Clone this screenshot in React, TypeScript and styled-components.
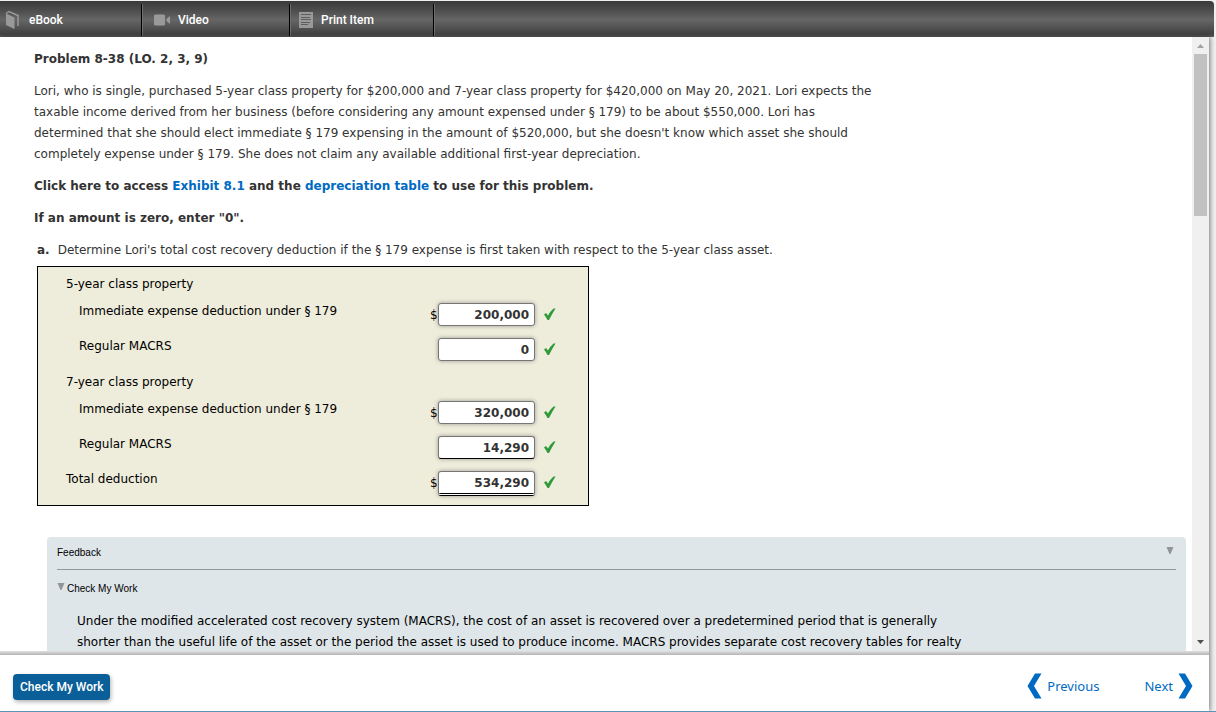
import React from "react";
import styled, { createGlobalStyle, css } from "styled-components";

const GlobalStyle = createGlobalStyle`
  *, *::before, *::after { box-sizing: border-box; }
  body { margin: 0; background: #f0f0f0; }
`;

const textFont = css`
  font-family: "DejaVu Sans", Verdana, sans-serif;
  font-size: 12px;
  line-height: 21px;
`;

const Page = styled.div`
  display: flex;
  flex-direction: column;
  height: 100vh;
  padding: 1px 2px 0 0;
  overflow: hidden;
  border-bottom: 1px solid #5b93b5;
`;

const Toolbar = styled.nav`
  flex: none;
  display: flex;
  height: 36px;
  border-radius: 0 4px 0 0;
  background: linear-gradient(#383a38, #4c4c4c 25%, #666 52%, #484848 85%, #444 92%, #606060);
`;

const ToolButton = styled.button<{ $width: number; $inset: number }>`
  display: flex;
  align-items: center;
  gap: 8px;
  width: ${(p) => p.$width}px;
  height: 32px;
  margin-top: 3px;
  padding: 0 0 0 ${(p) => p.$inset}px;
  border: 0;
  border-right: 1px solid #000;
  box-shadow: 1px 0 0 #6e6e6e;
  background: none;
  color: #fff;
  font: 500 12px/16px Roboto, "Liberation Sans", sans-serif;
  text-align: left;
`;

const Sheet = styled.div`
  flex: 1;
  min-height: 0;
  display: flex;
  flex-direction: column;
  margin-right: 5px;
  background: #fff;
  box-shadow: 1px 0 5px rgba(0, 0, 0, 0.5);
`;

const Viewport = styled.div`
  flex: 1;
  min-height: 0;
  display: flex;
`;

const Content = styled.main`
  flex: 1;
  min-width: 0;
  overflow: hidden;
  padding: 12px 6px 0 34px;
  color: #333;
  ${textFont}
`;

const Heading = styled.h1`
  margin: 0 0 11px;
  font: inherit;
  font-weight: bold;
`;

const Paragraph = styled.p<{ $strong?: boolean }>`
  margin: 0 0 11px;
  font-weight: ${(p) => (p.$strong ? "bold" : "normal")};
`;

const TextLink = styled.a`
  color: #006ac3;
  text-decoration: none;
`;

const Question = styled.div`
  display: flex;
  gap: 8px;
  margin: 0 3px 5px;
`;

const Worksheet = styled.div`
  width: 552px;
  margin-left: 3px;
  padding: 3px 0 4px 28px;
  border: 1px solid #000;
  background: #eeecdb;
  color: #000;
`;

const AnswerTable = styled.table`
  width: 100%;
  border-collapse: collapse;
  table-layout: fixed;
`;

const LabelColumn = styled.col`
  width: 364px;
`;

const GroupCell = styled.th`
  height: 28px;
  padding: 0;
  font-weight: normal;
  text-align: left;
`;

const LabelCell = styled.th<{ $indent: boolean }>`
  height: 35px;
  padding: 3px 0 0 ${(p) => (p.$indent ? 13 : 0)}px;
  font-weight: normal;
  text-align: left;
  vertical-align: top;
`;

const AmountCell = styled.td`
  padding: 5px 0 0;
  vertical-align: top;
`;

const Amount = styled.div`
  display: flex;
  align-items: flex-start;
`;

const Currency = styled.span`
  width: 8px;
  line-height: 24px;
`;

type Rule = "none" | "single" | "double";

const AmountInput = styled.input<{ $rule: Rule }>`
  width: 97px;
  height: ${(p) => (p.$rule === "double" ? 25 : 23)}px;
  margin: 0 9px 0 0;
  padding: 0 5px;
  border: 1px solid #767676;
  ${(p) => p.$rule === "single" && "border-bottom-color: #000;"}
  ${(p) => p.$rule === "double" && "border-bottom: 3px double #000;"}
  border-radius: 3px;
  box-shadow: 0 0 4px rgba(0, 0, 0, 0.35);
  background: #fff;
  color: #333;
  ${textFont}
  font-weight: bold;
  text-align: right;
`;

const CheckIcon = styled.svg`
  display: block;
  margin-top: 5px;
`;

const FeedbackPanel = styled.section`
  min-height: 320px;
  margin: 31px 0 0 13px;
  padding: 0 10px;
  border-radius: 4px 4px 0 0;
  background: #dee6e9;
  color: #000;
`;

const FeedbackToggle = styled.button`
  display: flex;
  align-items: center;
  gap: 2px;
  width: 100%;
  padding: 0;
  border: 0;
  background: none;
  color: #000;
  font: 10px/12px "Liberation Sans", Arial, sans-serif;
  text-align: left;
`;

const PanelTitle = styled(FeedbackToggle)`
  justify-content: space-between;
  height: 33px;
  padding-right: 2px;
  border-bottom: 1px solid #8f9a9c;
`;

const SectionTitle = styled(FeedbackToggle)`
  height: 36px;
  padding-top: 2px;
`;

const Marker = styled.svg`
  display: block;
  margin-bottom: 6px;
`;

const Explanation = styled.p`
  margin: 5px 20px 0;
`;

const ScrollTrack = styled.div`
  flex: none;
  display: flex;
  flex-direction: column;
  align-items: center;
  width: 17px;
  background: #f0f0f0;
`;

const ScrollArrow = styled.svg`
  flex: none;
  display: block;
`;

const ScrollRange = styled.div`
  flex: 1;
  align-self: stretch;
  padding: 0 2px;
`;

const ScrollThumb = styled.div`
  height: 28%;
  background: #c1c1c1;
`;

const FooterEdge = styled.div`
  flex: none;
  height: 4px;
  background: linear-gradient(#e0e0e0, #b4b4b4);
`;

const Footer = styled.footer`
  flex: none;
  display: flex;
  align-items: center;
  justify-content: space-between;
  height: 56px;
  padding: 8px 16px 0 13px;
  background: #fff;
`;

const SubmitButton = styled.button`
  height: 26px;
  padding: 0 7px;
  border: 0;
  border-radius: 4px;
  box-shadow: 1px 2px 4px rgba(0, 0, 0, 0.3);
  background: #0b5f99;
  color: #fff;
  font: 500 12px/26px Roboto, "Noto Sans", sans-serif;
`;

const Pager = styled.nav`
  display: flex;
  gap: 45px;
  padding-bottom: 2px;
`;

const PagerLink = styled.a`
  display: flex;
  align-items: center;
  gap: 5px;
  color: #006ac3;
  font: 13px/26px "Noto Sans", "Open Sans", sans-serif;
  text-decoration: none;
`;

const BookIcon = () => (
  <svg width="16" height="20" viewBox="0 0 16 20" aria-hidden="true">
    <path d="M1 3.500 9.500 7.500V19L1 15Z" fill="#999" />
    <path d="M1 3.500 4 1.500 13 5.500V16" fill="none" stroke="#999" strokeWidth="1.500" />
  </svg>
);

const VideoIcon = () => (
  <svg width="16" height="12" viewBox="0 0 16 12" aria-hidden="true">
    <rect y="0.500" width="11" height="11" rx="1.500" fill="#999" />
    <path d="M16 2V10L12.500 7V5Z" fill="#999" />
  </svg>
);

const PrintIcon = () => (
  <svg width="14" height="16" viewBox="0 0 14 16" aria-hidden="true">
    <rect width="14" height="16" fill="#999" />
    <path d="M2 2.500H12M2 5.500H11M2 7.500H12M2 10.500H11M2 12.500H9" stroke="#5e5e5e" />
  </svg>
);

const Check = () => (
  <CheckIcon width="12" height="13" viewBox="0 0 12 13" role="img" aria-label="Correct">
    <path d="M0 6.500 2 5 4 7.500Q6.500 3 9.500 0.500H11.500Q8 6 5 12H3.500Q2 9 0 6.500Z" fill="#2f9a3a" />
  </CheckIcon>
);

const Triangle = () => (
  <Marker width="8" height="7" viewBox="0 0 8 7" aria-hidden="true">
    <path d="M0.500 0H7.500L4.500 7H3.500Z" fill="#8f9598" />
  </Marker>
);

const tools = [
  { label: "eBook", width: 142, inset: 5, icon: <BookIcon /> },
  { label: "Video", width: 148, inset: 12, icon: <VideoIcon /> },
  { label: "Print Item", width: 144, inset: 9, icon: <PrintIcon /> },
];

interface Entry {
  id: string;
  label: string;
  value: string;
  currency?: boolean;
  rule?: Rule;
  indent?: boolean;
}

const groups: { title?: string; entries: Entry[] }[] = [
  {
    title: "5-year class property",
    entries: [
      { id: "five-179", label: "Immediate expense deduction under § 179", value: "200,000", currency: true, indent: true },
      { id: "five-macrs", label: "Regular MACRS", value: "0", indent: true },
    ],
  },
  {
    title: "7-year class property",
    entries: [
      { id: "seven-179", label: "Immediate expense deduction under § 179", value: "320,000", currency: true, indent: true },
      { id: "seven-macrs", label: "Regular MACRS", value: "14,290", rule: "single", indent: true },
    ],
  },
  { entries: [{ id: "total", label: "Total deduction", value: "534,290", currency: true, rule: "double" }] },
];

const EntryRow = ({ entry }: { entry: Entry }) => (
  <tr>
    <LabelCell scope="row" $indent={!!entry.indent}>
      <label htmlFor={entry.id}>{entry.label}</label>
    </LabelCell>
    <AmountCell>
      <Amount>
        <Currency>{entry.currency ? "$" : ""}</Currency>
        <AmountInput id={entry.id} type="text" defaultValue={entry.value} $rule={entry.rule ?? "none"} />
        <Check />
      </Amount>
    </AmountCell>
  </tr>
);

export default function App() {
  return (
    <Page>
      <GlobalStyle />
      <Toolbar>
        {tools.map((tool) => (
          <ToolButton key={tool.label} type="button" $width={tool.width} $inset={tool.inset}>
            {tool.icon}
            {tool.label}
          </ToolButton>
        ))}
      </Toolbar>
      <Sheet>
        <Viewport>
          <Content>
            <Heading>Problem 8-38 (LO. 2, 3, 9)</Heading>
            <Paragraph>
              Lori, who is single, purchased 5-year class property for $200,000 and 7-year class property for $420,000 on May 20, 2021. Lori expects the
              <br />
              taxable income derived from her business (before considering any amount expensed under § 179) to be about $550,000. Lori has
              <br />
              determined that she should elect immediate § 179 expensing in the amount of $520,000, but she doesn't know which asset she should
              <br />
              completely expense under § 179. She does not claim any available additional first-year depreciation.
            </Paragraph>
            <Paragraph $strong>
              Click here to access <TextLink href="#exhibit">Exhibit 8.1</TextLink> and the{" "}
              <TextLink href="#depreciation">depreciation table</TextLink> to use for this problem.
            </Paragraph>
            <Paragraph $strong>If an amount is zero, enter "0".</Paragraph>
            <Question>
              <b>a.</b>
              <span>Determine Lori's total cost recovery deduction if the § 179 expense is first taken with respect to the 5-year class asset.</span>
            </Question>
            <Worksheet>
              <AnswerTable>
                <colgroup>
                  <LabelColumn />
                  <col />
                </colgroup>
                {groups.map((group, i) => (
                  <tbody key={i}>
                    {group.title && (
                      <tr>
                        <GroupCell colSpan={2} scope="rowgroup">{group.title}</GroupCell>
                      </tr>
                    )}
                    {group.entries.map((entry) => (
                      <EntryRow key={entry.id} entry={entry} />
                    ))}
                  </tbody>
                ))}
              </AnswerTable>
            </Worksheet>
            <FeedbackPanel>
              <PanelTitle type="button">
                Feedback
                <Triangle />
              </PanelTitle>
              <SectionTitle type="button">
                <Triangle />
                Check My Work
              </SectionTitle>
              <Explanation>
                Under the modified accelerated cost recovery system (MACRS), the cost of an asset is recovered over a predetermined period that is generally
                <br />
                shorter than the useful life of the asset or the period the asset is used to produce income. MACRS provides separate cost recovery tables for realty
              </Explanation>
            </FeedbackPanel>
          </Content>
          <ScrollTrack aria-hidden="true">
            <ScrollArrow width="17" height="17" viewBox="0 0 17 17">
              <path d="M5 11H12L8.500 7Z" fill="#a3a3a3" />
            </ScrollArrow>
            <ScrollRange>
              <ScrollThumb />
            </ScrollRange>
            <ScrollArrow width="17" height="17" viewBox="0 0 17 17">
              <path d="M5 6H12L8.500 10Z" fill="#505050" />
            </ScrollArrow>
          </ScrollTrack>
        </Viewport>
        <FooterEdge />
        <Footer>
          <SubmitButton type="button">Check My Work</SubmitButton>
          <Pager>
            <PagerLink href="#previous">
              <svg width="15" height="26" viewBox="0 0 15 26" aria-hidden="true">
                <path d="M8 0.500H14.500L7 13 14.500 25.500H8L0.500 13Z" fill="#006ac3" />
              </svg>
              Previous
            </PagerLink>
            <PagerLink href="#next">
              Next
              <svg width="15" height="26" viewBox="0 0 15 26" aria-hidden="true">
                <path d="M7 0.500H0.500L8 13 0.500 25.500H7L14.500 13Z" fill="#006ac3" />
              </svg>
            </PagerLink>
          </Pager>
        </Footer>
      </Sheet>
    </Page>
  );
}
